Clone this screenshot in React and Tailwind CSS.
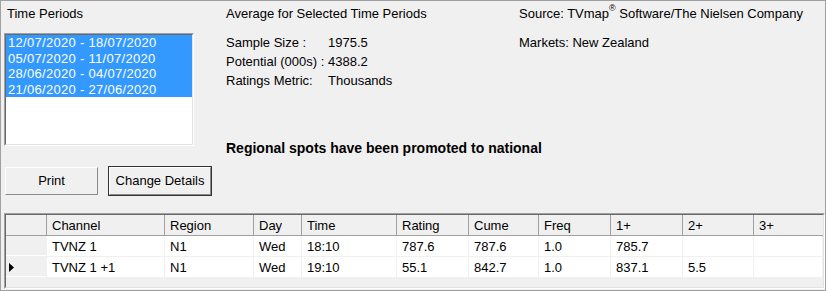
import React from 'react'

const periods = [
	'12/07/2020 - 18/07/2020',
	'05/07/2020 - 11/07/2020',
	'28/06/2020 - 04/07/2020',
	'21/06/2020 - 27/06/2020',
]

const columns = [
	{ key: 'channel', label: 'Channel', w: 'w-[118px]' },
	{ key: 'region', label: 'Region', w: 'w-[89px]' },
	{ key: 'day', label: 'Day', w: 'w-[48px]' },
	{ key: 'time', label: 'Time', w: 'w-[95px]' },
	{ key: 'rating', label: 'Rating', w: 'w-[72px]' },
	{ key: 'cume', label: 'Cume', w: 'w-[70px]' },
	{ key: 'freq', label: 'Freq', w: 'w-[72px]' },
	{ key: 'r1', label: '1+', w: 'w-[72px]' },
	{ key: 'r2', label: '2+', w: 'w-[71px]' },
	{ key: 'r3', label: '3+', w: 'w-[69px]' },
]

const rows = [
	{ channel: 'TVNZ 1', region: 'N1', day: 'Wed', time: '18:10', rating: '787.6', cume: '787.6', freq: '1.0', r1: '785.7', r2: '', r3: '' },
	{ channel: 'TVNZ 1 +1', region: 'N1', day: 'Wed', time: '19:10', rating: '55.1', cume: '842.7', freq: '1.0', r1: '837.1', r2: '5.5', r3: '', current: true },
]

// kleine knop in windows-stijl
function WinButton({ children, isDefault }) {
	return (
		<div className={`h-[30px] ${isDefault ? 'w-[104px] border border-[#333]' : 'w-[95px] p-px'}`}>
			<div className="h-full w-full border border-t-white border-l-white border-r-[#8a8a8a] border-b-[#8a8a8a] bg-[#f0f0f0] flex items-center justify-center leading-[16px]">
				{children}
			</div>
		</div>
	)
}

export default function App() {
	return (
		<div
			className="w-[826px] h-[291px] bg-[#f0f0f0] border border-[#a0a0a0] text-[13px] text-black overflow-hidden"
			style={{ fontFamily: '"Liberation Sans", Arial, sans-serif' }}
		>
			<div className="flex pt-[3px] pl-[3px] h-[212px]">
				{/* linkerkolom: periodes + knoppen */}
				<div className="w-[208px] flex flex-col">
					<div className="leading-[19px] pl-[3px]">Time Periods</div>
					<div className="mt-[10px] w-[190px] h-[113px] border border-t-[#a0a0a0] border-l-[#a0a0a0] border-r-white border-b-white">
						<div className="h-full w-full bg-white border border-t-[#696969] border-l-[#696969] border-r-[#e3e3e3] border-b-[#e3e3e3]">
							{periods.map(p => (
								<div key={p} className="h-[15.5px] leading-[16px] bg-[#3399ff] text-white pl-[2px] tracking-[0.3px]">
									{p}
								</div>
							))}
						</div>
					</div>
					<div className="mt-[20px] flex gap-[9px]">
						<WinButton>Print</WinButton>
						<WinButton isDefault>Change Details</WinButton>
					</div>
				</div>

				{/* middenkolom: gemiddelden */}
				<div className="ml-[13px] w-[294px] pl-px">
					<div className="leading-[19px]">Average for Selected Time Periods</div>
					<div className="mt-[10px] leading-[19px]">
						<div className="flex"><span className="w-[102px]">Sample Size :</span><span>1975.5</span></div>
						<div className="flex"><span className="w-[102px] whitespace-nowrap">Potential (000s) :</span><span>4388.2</span></div>
						<div className="flex"><span className="w-[102px]">Ratings Metric:</span><span>Thousands</span></div>
					</div>
					<div className="mt-[49px] leading-[19px] font-bold text-[14px] whitespace-nowrap">
						Regional spots have been promoted to national
					</div>
				</div>

				{/* rechterkolom: bron */}
				<div className="leading-[19px]">
					<div>Source: TVmap<sup className="text-[9px] align-[3px]">®</sup> Software/The Nielsen Company</div>
					<div className="mt-[10px]">Markets: New Zealand</div>
				</div>
			</div>

			{/* tabel */}
			<div className="ml-[3px] w-[821px] h-[76px] border border-t-[#a0a0a0] border-l-[#a0a0a0] border-r-white border-b-white">
				<div className="h-full w-full bg-[#f0f0f0] border border-t-[#696969] border-l-[#696969] border-r-[#e3e3e3] border-b-[#e3e3e3]">
					<div className="flex h-[21px] border-b border-[#a0a0a0]">
						<div className="w-[40px] bg-[#f0f0f0]" />
						{columns.map(c => (
							<div key={c.key} className={`${c.w} border-l border-[#a0a0a0] bg-[#f0f0f0] pl-[5px] pt-px leading-[19px] whitespace-nowrap`}>
								{c.label}
							</div>
						))}
					</div>
					{rows.map((r, i) => (
						<div key={i} className="flex h-[21px] border-b border-[#f0f0f0]">
							<div className="w-[40px] bg-[#f0f0f0] border-b border-white flex items-center pl-[3px] pt-[2px]">
								{r.current && (
									<svg width="5" height="9" viewBox="0 0 5 9"><path d="M0 0 L5 4.5 L0 9 Z" fill="#000" /></svg>
								)}
							</div>
							{columns.map(c => (
								<div key={c.key} className={`${c.w} bg-white border-l border-[#f0f0f0] pl-[5px] pt-[2px] leading-[18px] whitespace-nowrap`}>
									{r[c.key]}
								</div>
							))}
						</div>
					))}
				</div>
			</div>
		</div>
	)
}
